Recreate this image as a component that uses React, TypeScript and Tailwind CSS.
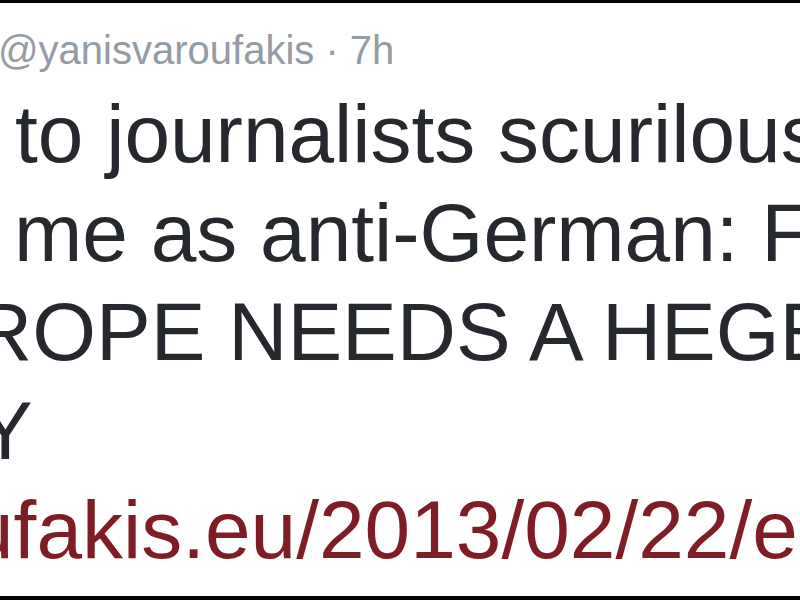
export default function App() {
  const font = { fontFamily: '"Liberation Sans", Arial, sans-serif' };
  return (
    <div className="flex h-[600px] w-[800px] flex-col overflow-hidden bg-white" style={font}>
      <div className="h-[3px] w-full shrink-0 bg-black" />
      <div className="flex flex-1 flex-col overflow-hidden">
        <div className="mt-[19px] ml-[-2px] whitespace-nowrap text-[40px] leading-[56px] text-[#939ca4]">
          @yanisvaroufakis · 7h
        </div>
        <div className="mt-[6px] flex flex-col whitespace-nowrap text-[82px] leading-[99px] text-[#25292e]">
          <div className="ml-[15px]">to journalists scurilously</div>
          <div className="ml-[14px]">me as anti-German: FEAR</div>
          <div className="ml-[-27px]">ROPE NEEDS A HEGEMONIC</div>
          <div className="ml-[-22px]">Y</div>
          <div className="ml-[-32px] text-[#7f1d27]">ufakis.eu/2013/02/22/europe</div>
        </div>
      </div>
      <div className="h-[4px] w-full shrink-0 bg-black" />
    </div>
  );
}
